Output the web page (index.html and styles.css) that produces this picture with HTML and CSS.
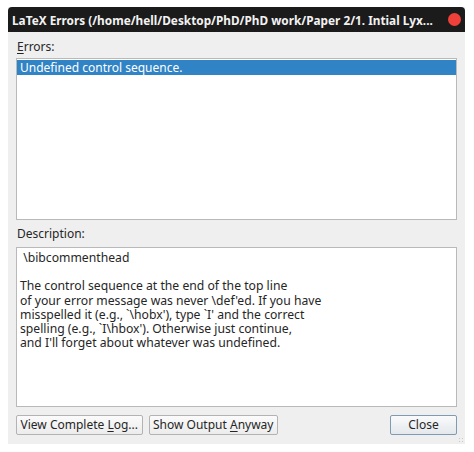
FILE: index.html
```html
<!DOCTYPE html>
<html>
<head>
<meta charset="utf-8">
<link rel="stylesheet" href="styles.css">
</head>
<body>
<div class="window">
  <div class="titlebar">
    <span class="title">LaTeX Errors (/home/hell/Desktop/PhD/PhD work/Paper 2/1. Intial Lyx...</span>
    <span class="close-dot"></span>
  </div>
  <div class="body">
    <div class="label"><u>E</u>rrors:</div>
    <div class="list">
      <div class="row selected">Undefined control sequence.</div>
    </div>
    <div class="label label-desc">Description:</div>
    <div class="desc"> \bibcommenthead

The control sequence at the end of the top line
of your error message was never \def'ed. If you have
misspelled it (e.g., `\hobx'), type `I' and the correct
spelling (e.g., `I\hbox'). Otherwise just continue,
and I'll forget about whatever was undefined.</div>
    <div class="buttons">
      <button class="btn">View Complete <u>L</u>og...</button>
      <button class="btn">Show Output <u>A</u>nyway</button>
      <span class="spacer"></span>
      <button class="btn btn-default">Close</button>
    </div>
    <span class="grip"></span>
  </div>
</div>
</body>
</html>
```

FILE: styles.css
```css
html, body {
  margin: 0;
  padding: 0;
  background: #ffffff;
}
body {
  font-family: "Noto Sans", "DejaVu Sans", sans-serif;
  font-size: 12px;
  color: #262626;
}
.window {
  margin: 7px 0 0 8px;
  width: 457px;
  height: 437px;
  display: flex;
  flex-direction: column;
  background: #efefef;
}
.titlebar {
  height: 25px;
  background: #1b1b1b;
  border-radius: 4px 4px 0 0;
  display: flex;
  align-items: center;
  padding: 0 4px 0 4px;
  gap: 4px;
}
.title {
  flex: 1;
  color: #f2f2f2;
  font-weight: bold;
  font-size: 11.8px;
  white-space: nowrap;
  overflow: hidden;
}
.close-dot {
  width: 13px;
  height: 13px;
  border-radius: 50%;
  background: #f0403a;
  flex: none;
}
.body {
  flex: 1;
  display: flex;
  flex-direction: column;
  padding: 7px 8px 0 8px;
  position: relative;
}
.label {
  height: 16px;
  line-height: 16px;
  padding-left: 1px;
  margin-bottom: 3px;
}
.label u {
  text-underline-offset: 2px;
}
.label-desc {
  margin-top: 6px;
  margin-bottom: 5px;
}
.list {
  height: 159px;
  background: #ffffff;
  border: 1px solid #b9b9b9;
  padding: 1px 0 0 0;
}
.row {
  height: 15px;
  line-height: 15px;
  padding-left: 3px;
}
.selected {
  background: #3083c5;
  color: #ffffff;
}
.desc {
  height: 154px;
  background: #ffffff;
  border: 1px solid #b9b9b9;
  padding: 3px 3px 1px 3px;
  white-space: pre;
  font-size: 12.2px;
  line-height: 14.2px;
  color: #262626;
}
.buttons {
  display: flex;
  gap: 6px;
  margin-top: 8px;
}
.spacer {
  flex: 1;
}
.btn {
  font-family: inherit;
  font-size: 12px;
  color: #262626;
  height: 20px;
  padding: 0 3.5px;
  background: linear-gradient(#fbfbfb, #ececec);
  border: 1px solid #b3b3b3;
  border-radius: 2px;
  line-height: 18px;
}
.btn u {
  text-underline-offset: 2px;
}
.btn-default {
  width: 67px;
  border-color: #7f9bb3;
  background: linear-gradient(#f9fafb, #e4e8ec);
}
.grip {
  position: absolute;
  right: 1px;
  bottom: 1px;
  width: 6px;
  height: 6px;
  background-image: radial-gradient(circle, #c8c8c8 0.8px, transparent 1px);
  background-size: 3px 3px;
}
```
